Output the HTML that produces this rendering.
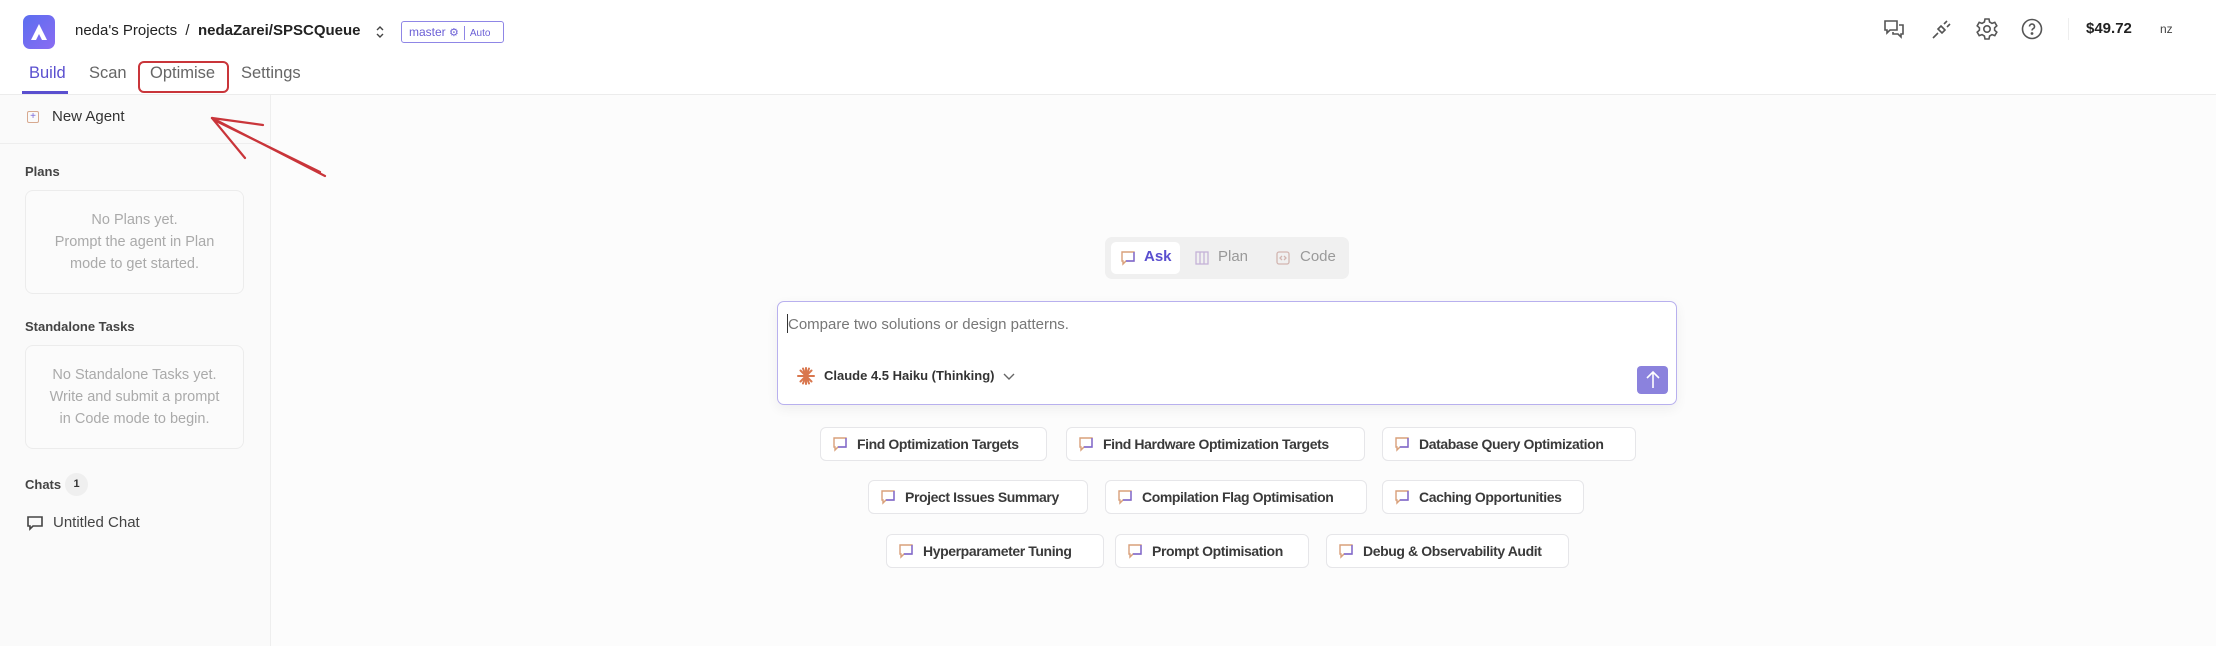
<!DOCTYPE html>
<html><head><meta charset="utf-8"><style>
*{box-sizing:border-box;margin:0;padding:0}
body{width:2216px;height:646px;overflow:hidden;background:#fcfcfc;font-family:"Liberation Sans",sans-serif;color:#222;position:relative}
.a{position:absolute;white-space:nowrap}
.chip{position:absolute;height:34px;border:1px solid #e6e6e9;border-radius:6px;background:#fff;font-weight:bold;font-size:14px;letter-spacing:-0.4px;color:#3a3a3a;line-height:32px;padding-left:36px;white-space:nowrap;overflow:hidden}
.chip svg{position:absolute;left:11px;top:8px}
.box{position:absolute;left:25px;width:219px;height:104px;border:1px solid #ececec;border-radius:8px;background:#fbfbfb;text-align:center;color:#aaa;font-size:14.5px;line-height:22px;padding-top:18px}
.tab{position:absolute;top:64px;font-size:16.5px;color:#666;white-space:nowrap}
</style></head><body>
<div class="a" style="left:0;top:0;width:2216px;height:94px;background:#fff"></div>
<div class="a" style="left:0;top:94px;width:2216px;height:1px;background:#ececec"></div>
<div class="a" style="left:23px;top:15px;width:32px;height:34px;border-radius:7px;background:linear-gradient(135deg,#5b6ef0,#8a6cf2)"></div>
<svg class="a" style="left:27px;top:20px" width="24" height="24" viewBox="0 0 24 24"><path d="M4 20 L12 4 L20 20 L15 20 L12 14 L9 20 Z" fill="#fff"/></svg>
<div class="a" style="left:75px;top:22px;font-size:15px;color:#222">neda's Projects&nbsp;&nbsp;/&nbsp;&nbsp;<b>nedaZarei/SPSCQueue</b></div>
<svg class="a" style="left:374px;top:23px" width="12" height="18" viewBox="0 0 12 18"><path d="M3 7 L6 4 L9 7 M3 11 L6 14 L9 11" stroke="#444" stroke-width="1.4" fill="none"/></svg>
<div class="a" style="left:401px;top:21px;width:103px;height:22px;border:1px solid #8f86e6;border-radius:3px;font-size:12px;color:#6b5fd6;line-height:20px;padding-left:7px">master <span style="font-size:11px">⚙</span><span style="display:inline-block;width:1px;height:14px;background:#8f86e6;vertical-align:middle;margin:0 5px"></span><span style="font-size:10px">Auto</span></div>
<div class="tab" style="left:29px;color:#5a4fcf">Build</div>
<div class="a" style="left:22px;top:91px;width:46px;height:3px;background:#5a4fcf"></div>
<div class="tab" style="left:89px">Scan</div>
<div class="tab" style="left:150px">Optimise</div>
<div class="tab" style="left:241px">Settings</div>
<div class="a" style="left:138px;top:61px;width:91px;height:32px;border:2px solid #c9353a;border-radius:6px"></div>
<svg class="a" style="left:1883px;top:18px" width="22" height="22" viewBox="0 0 22 22" fill="none" stroke="#555" stroke-width="1.6"><path d="M2 3h12v9H7l-3 3v-3H2z"/><path d="M16 7h4v9h-2v3l-3-3h-5v-2"/></svg>
<svg class="a" style="left:1931px;top:18px" width="22" height="22" viewBox="0 0 22 22" fill="none" stroke="#555" stroke-width="1.6"><path d="M2 20l5-5M7 11l4 4 3-3-4-4zM13 6l3-3M16 9l3-3M10 8l4 4"/></svg>
<svg class="a" style="left:1975px;top:17px" width="24" height="24" viewBox="0 0 24 24" fill="none" stroke="#555" stroke-width="1.6"><circle cx="12" cy="12" r="3.2"/><path d="M10 2h4l.6 3 2.4 1.4 2.8-1 2 3.4-2.2 2v2.4l2.2 2-2 3.4-2.8-1L14.6 19 14 22h-4l-.6-3-2.4-1.4-2.8 1-2-3.4 2.2-2v-2.4l-2.2-2 2-3.4 2.8 1L9.4 5z"/></svg>
<svg class="a" style="left:2020px;top:17px" width="24" height="24" viewBox="0 0 24 24" fill="none" stroke="#555" stroke-width="1.6"><circle cx="12" cy="12" r="9.5"/><path d="M9.5 9.5a2.5 2.5 0 1 1 3.5 2.3c-.7.4-1 .9-1 1.7"/><circle cx="12" cy="16.5" r=".6" fill="#555"/></svg>
<div class="a" style="left:2068px;top:18px;width:1px;height:22px;background:#eee"></div>
<div class="a" style="left:2086px;top:20px;font-size:15px;font-weight:bold;color:#222">$49.72</div>
<div class="a" style="left:2160px;top:22px;font-size:12px;color:#444">nz</div>
<div class="a" style="left:0;top:95px;width:271px;height:551px;background:#fafafa;border-right:1px solid #eee"></div>
<div class="a" style="left:0;top:143px;width:271px;height:1px;background:#eee"></div>
<div class="a" style="left:27px;top:111px;width:12px;height:12px;border:1px solid #d7a98f;border-radius:2px;font-size:10px;line-height:10px;text-align:center;color:#7a68d8">+</div>
<div class="a" style="left:52px;top:108px;font-size:15px;color:#333">New Agent</div>
<div class="a" style="left:25px;top:164px;font-size:13px;font-weight:bold;color:#444">Plans</div>
<div class="box" style="top:190px">No Plans yet.<br>Prompt the agent in Plan<br>mode to get started.</div>
<div class="a" style="left:25px;top:319px;font-size:13px;font-weight:bold;color:#444">Standalone Tasks</div>
<div class="box" style="top:345px">No Standalone Tasks yet.<br>Write and submit a prompt<br>in Code mode to begin.</div>
<div class="a" style="left:25px;top:477px;font-size:13px;font-weight:bold;color:#444">Chats</div>
<div class="a" style="left:65px;top:473px;width:23px;height:23px;border-radius:50%;background:#efefef;font-size:11px;font-weight:bold;text-align:center;line-height:23px;color:#333">1</div>
<svg class="a" style="left:26px;top:514px" width="18" height="18" viewBox="0 0 18 18" fill="none" stroke="#444" stroke-width="1.6"><path d="M2 3h14v9H7l-3 3v-3H2z"/></svg>
<div class="a" style="left:53px;top:514px;font-size:15px;color:#444">Untitled Chat</div>
<svg class="a" style="left:200px;top:100px" width="150" height="90" viewBox="0 0 150 90" fill="none" stroke="#c9353a" stroke-width="2.2" stroke-linecap="round"><path d="M12 18 L125 76"/><path d="M14 20 L120 72"/><path d="M12 18 L63 25"/><path d="M12 18 L45 58"/></svg>
<div class="a" style="left:1105px;top:237px;width:244px;height:42px;background:#f0f0f0;border-radius:7px"></div>
<div class="a" style="left:1111px;top:242px;width:69px;height:32px;background:#fff;border-radius:5px"></div>
<svg class="a" style="left:1120px;top:250px" width="16" height="16" viewBox="0 0 16 16" fill="none" stroke-width="1.4"><path d="M2 2h12v9H6l-3 3v-3H2z" stroke="#d9a07a"/><path d="M14 2v9H6" stroke="#7a68d8"/></svg>
<div class="a" style="left:1144px;top:248px;font-size:15px;font-weight:bold;color:#5a4fcf">Ask</div>
<svg class="a" style="left:1194px;top:250px" width="16" height="16" viewBox="0 0 16 16" fill="none" stroke="#c5b3d8" stroke-width="1.3"><rect x="2" y="2" width="12" height="12"/><path d="M6 2v12M10 2v12"/></svg>
<div class="a" style="left:1218px;top:248px;font-size:15px;color:#999">Plan</div>
<svg class="a" style="left:1275px;top:250px" width="16" height="16" viewBox="0 0 16 16" fill="none" stroke="#d2b5b0" stroke-width="1.3"><rect x="2" y="2" width="12" height="12" rx="2"/><path d="M7 6l-2 2 2 2M9 6l2 2-2 2"/></svg>
<div class="a" style="left:1300px;top:248px;font-size:15px;color:#999">Code</div>
<div class="a" style="left:777px;top:301px;width:900px;height:104px;border:1.5px solid #b8b0ee;border-radius:7px;background:#fff;box-shadow:0 4px 12px rgba(0,0,0,0.06)"></div>
<div class="a" style="left:787px;top:314px;width:1px;height:19px;background:#333"></div>
<div class="a" style="left:788px;top:316px;font-size:15px;color:#777">Compare two solutions or design patterns.</div>
<svg class="a" style="left:796px;top:366px" width="20" height="20" viewBox="0 0 20 20" stroke="#d9774e" stroke-width="2" stroke-linecap="round"><path d="M10 2v16M2 10h16M4.5 4.5l11 11M15.5 4.5l-11 11M7 2.5l6 15M13 2.5l-6 15"/></svg>
<div class="a" style="left:824px;top:368px;font-size:13px;font-weight:bold;color:#333">Claude 4.5 Haiku (Thinking)</div>
<svg class="a" style="left:1003px;top:371px" width="12" height="10" viewBox="0 0 12 10" fill="none" stroke="#666" stroke-width="1.4"><path d="M1 3l5 5 5-5"/></svg>
<div class="a" style="left:1637px;top:366px;width:31px;height:28px;background:#8b82dd;border-radius:4px"></div>
<svg class="a" style="left:1643px;top:369px" width="20" height="22" viewBox="0 0 20 22" fill="none" stroke="#fff" stroke-width="1.6"><path d="M10 19V3M4 9l6-6 6 6"/></svg>
<svg width="0" height="0" style="position:absolute"><defs><g id="ci" fill="none" stroke-width="1.4"><path d="M2 2h12v9H6l-3 3v-3H2z" stroke="#d9a07a"/><path d="M14 2v9H6" stroke="#7a68d8"/></g></defs></svg>
<div class="chip" style="left:820px;top:427px;width:227px"><svg width="16" height="16"><use href="#ci"/></svg>Find Optimization Targets</div>
<div class="chip" style="left:1066px;top:427px;width:299px"><svg width="16" height="16"><use href="#ci"/></svg>Find Hardware Optimization Targets</div>
<div class="chip" style="left:1382px;top:427px;width:254px"><svg width="16" height="16"><use href="#ci"/></svg>Database Query Optimization</div>
<div class="chip" style="left:868px;top:480px;width:220px"><svg width="16" height="16"><use href="#ci"/></svg>Project Issues Summary</div>
<div class="chip" style="left:1105px;top:480px;width:262px"><svg width="16" height="16"><use href="#ci"/></svg>Compilation Flag Optimisation</div>
<div class="chip" style="left:1382px;top:480px;width:202px"><svg width="16" height="16"><use href="#ci"/></svg>Caching Opportunities</div>
<div class="chip" style="left:886px;top:534px;width:218px"><svg width="16" height="16"><use href="#ci"/></svg>Hyperparameter Tuning</div>
<div class="chip" style="left:1115px;top:534px;width:194px"><svg width="16" height="16"><use href="#ci"/></svg>Prompt Optimisation</div>
<div class="chip" style="left:1326px;top:534px;width:243px"><svg width="16" height="16"><use href="#ci"/></svg>Debug &amp; Observability Audit</div>
</body></html>
